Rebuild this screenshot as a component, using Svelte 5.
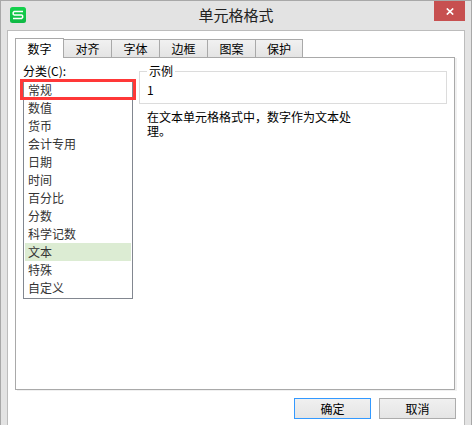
<script lang="ts">
  const tabs = ["数字", "对齐", "字体", "边框", "图案", "保护"];

  const categories = [
    "常规",
    "数值",
    "货币",
    "会计专用",
    "日期",
    "时间",
    "百分比",
    "分数",
    "科学记数",
    "文本",
    "特殊",
    "自定义",
  ];

  let activeTab = $state("数字");
  let category = $state("文本");
</script>

<div class="window">
  <header class="titlebar">
    <svg class="logo" viewBox="0 0 16 16" aria-hidden="true">
      <defs>
        <linearGradient id="logo-fill" x1="0" y1="0" x2="0" y2="1">
          <stop offset="0" stop-color="#14d24c" />
          <stop offset="1" stop-color="#0fb945" />
        </linearGradient>
      </defs>
      <rect width="16" height="16" rx="2.5" fill="url(#logo-fill)" />
      <path
        d="M13 4.5H4.2L3.2 5.5V7.2L4.2 8H11.8L12.6 8.8V10.5L11.6 11.5H3"
        fill="none"
        stroke="#fff"
        stroke-width="1.5"
      />
    </svg>
    <h1>单元格格式</h1>
    <button class="close" aria-label="关闭">
      <svg viewBox="0 0 8 7" aria-hidden="true">
        <path d="M0.8 0.5L7.2 6.5M7.2 0.5L0.8 6.5" stroke="#fff" stroke-width="1.7" />
      </svg>
    </button>
  </header>

  <main class="client">
    <div class="tabs" role="tablist">
      {#each tabs as tab}
        <button
          class="tab"
          class:active={tab === activeTab}
          role="tab"
          aria-selected={tab === activeTab}
          onclick={() => (activeTab = tab)}
        >
          {tab}
        </button>
      {/each}
    </div>

    <div class="panel" role="tabpanel">
      <div class="category">
        <label for="category">分类(C):</label>
        <div class="list-wrap">
          <select id="category" size="12" bind:value={category}>
            {#each categories as name}
              <option value={name}>{name}</option>
            {/each}
          </select>
          <div class="highlight"></div>
        </div>
      </div>

      <div class="detail">
        <fieldset>
          <legend>示例</legend>
          <output>1</output>
        </fieldset>
        <p>在文本单元格格式中，数字作为文本处理。</p>
      </div>
    </div>

    <footer>
      <button class="action primary">确定</button>
      <button class="action">取消</button>
    </footer>
  </main>
</div>

<style>
  :global(body) {
    margin: 0;
  }

  .window,
  .window button,
  .window select {
    font-family: "Noto Sans CJK SC", sans-serif;
    font-size: 12px;
    line-height: 18px;
    color: #000;
  }

  .window {
    box-sizing: border-box;
    min-height: 100vh;
    display: flex;
    flex-direction: column;
    padding: 0 6px;
    background: #e3e3e3;
    border: 1px solid #a8a8a8;
    border-bottom: 0;
  }

  .titlebar {
    display: grid;
    grid-template-columns: 31px 1fr 31px;
    height: 29px;
  }

  .logo {
    width: 16px;
    height: 16px;
    margin: 6px 0 0 3px;
  }

  h1 {
    margin: 0;
    font-size: 15px;
    font-weight: 400;
    line-height: 28px;
    text-align: center;
    color: #222;
  }

  .close {
    display: flex;
    align-items: center;
    justify-content: center;
    height: 20px;
    padding: 0;
    border: 0;
    background: #c75050;
  }

  .close svg {
    width: 8px;
    height: 7px;
  }

  .client {
    flex: 1;
    display: flex;
    flex-direction: column;
    padding: 7px 8px 0 7px;
    background: #fff;
    border: 1px solid #bcbcbc;
    border-bottom: 0;
  }

  .tabs {
    display: flex;
    align-items: flex-end;
    position: relative;
  }

  .tab {
    width: 48px;
    height: 18px;
    padding: 0;
    border: 1px solid #a9a9a9;
    border-width: 1px 1px 0 0;
    background: linear-gradient(#f1f1f1, #e4e4e4);
  }

  .tab:last-child {
    width: 47px;
  }

  .window .tab.active {
    width: 49px;
    height: 20px;
    margin-bottom: -1px;
    border-left-width: 1px;
    background: #fff;
  }

  .panel {
    flex: 1;
    display: flex;
    gap: 6px;
    margin-right: 1px;
    padding: 4px 7px;
    border: 1px solid #a9a9a9;
    box-shadow: 2px 1px 0 #f0f0f0;
  }

  .category {
    width: 110px;
  }

  .category label {
    display: block;
    height: 17px;
  }

  .list-wrap {
    position: relative;
  }

  .window select {
    display: block;
    box-sizing: border-box;
    width: 100%;
    height: 220px;
    padding: 1px;
    overflow: hidden;
    border: 1px solid #828790;
    border-radius: 0;
    outline: 0;
    background: #fff;
  }

  option {
    box-sizing: border-box;
    height: 18px;
    min-height: 18px;
    padding: 0 3px;
    color: #333;
  }

  option:checked {
    color: #333;
    background: #dcecd3 linear-gradient(#dcecd3, #dcecd3);
  }

  .highlight {
    position: absolute;
    top: 0;
    left: -3px;
    right: -3px;
    height: 15px;
    border: 3px solid #ff3838;
    pointer-events: none;
  }

  .detail {
    flex: 1;
    min-width: 0;
  }

  fieldset {
    min-width: 0;
    height: 42px;
    box-sizing: border-box;
    margin: 0;
    padding: 1px 7px 0;
    border: 1px solid #dcdcdc;
  }

  legend {
    padding: 0 2px;
  }

  output {
    display: block;
  }

  p {
    max-width: 208px;
    margin: 6px 8px;
    line-height: 14px;
  }

  footer {
    display: flex;
    justify-content: flex-end;
    gap: 8px;
    padding: 8px 0 6px;
  }

  .action {
    width: 77px;
    height: 21px;
    padding: 0;
    border: 1px solid #acacac;
    background: linear-gradient(#f0f0f0, #e5e5e5);
  }

  .action.primary {
    border-color: #3399ff;
  }

  .window .action {
    line-height: 19px;
  }
</style>
